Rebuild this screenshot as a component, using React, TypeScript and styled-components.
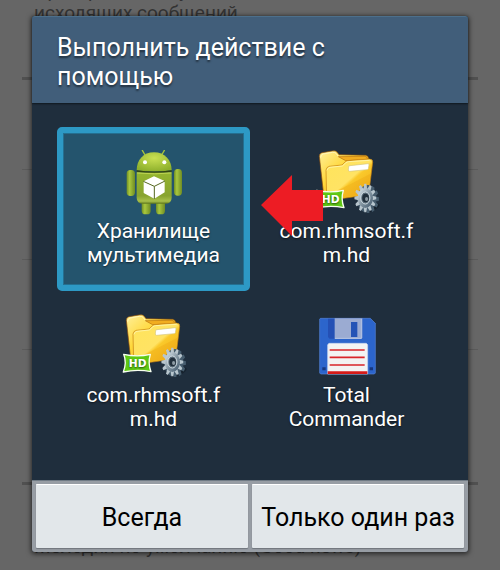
import React from "react";
import styled, { createGlobalStyle } from "styled-components";

const GlobalStyle = createGlobalStyle`
  * { box-sizing: border-box; }
  body {
    margin: 0;
    background: #666666;
    font-family: Roboto, "Noto Sans", sans-serif;
    overflow: hidden;
  }
`;

const Screen = styled.div`
  position: relative;
  min-height: 100vh;
  overflow: hidden;
`;

const SettingsPage = styled.main`
  padding: 2px 22px 0;
  color: #333333;
  font-size: 19px;
  line-height: 22px;
`;

const Summary = styled.p`
  margin: 0;
  padding: 0 12px;
  height: 22px;
  display: flex;
  align-items: flex-end;
`;

const SettingsGroup = styled.ul`
  list-style: none;
  margin: 53px 0 51px;
  padding: 0;
  border: solid #505050;
  border-width: 3px 0;
`;

const SettingsRow = styled.li<{ $tall?: boolean }>`
  height: ${(p) => (p.$tall ? 132 : 90)}px;
  border-bottom: ${(p) => (p.$tall ? "none" : "1px solid #5a5a5a")};
`;

const Overlay = styled.div`
  position: absolute;
  inset: 0;
  padding: 16px 32px 18px;
`;

const Dialog = styled.section`
  border-radius: 3px;
  box-shadow: 0 1px 5px 1px rgba(0, 0, 0, 0.6);
  background: #1f2e3d;
`;

const DialogHeader = styled.header`
  padding: 16px 25px 12px;
  background: #415e7a;
  border-top: 1px solid #4c6f8b;
  border-radius: 3px 3px 0 0;
  box-shadow: 0 1px 2px rgba(0, 0, 0, 0.5);
`;

const Title = styled.h1`
  margin: 0;
  max-width: 340px;
  color: #ffffff;
  font-size: 25px;
  font-weight: 400;
  line-height: 29px;
  text-shadow: 0 2px 2px rgba(0, 0, 0, 0.5);
`;

const AppGrid = styled.div`
  display: grid;
  grid-template-columns: 1fr 1fr;
  padding: 24px 25px 25px;
`;

const Cell = styled.div`
  position: relative;
  display: grid;
`;

const AppCard = styled.button<{ $selected?: boolean }>`
  display: flex;
  flex-direction: column;
  align-items: center;
  justify-content: flex-start;
  min-height: 164px;
  padding: 17px 20px;
  border: 6px solid ${(p) => (p.$selected ? "#2d99c5" : "transparent")};
  border-radius: 5px;
  background: ${(p) => (p.$selected ? "#24546d" : "transparent")};
  box-shadow: ${(p) => (p.$selected ? "inset 0 0 0 1px #246f90" : "none")};
  color: #ffffff;
  font: 400 21px/24px Roboto, "Noto Sans", sans-serif;
  text-shadow: 0 1px 2px rgba(0, 0, 0, 0.6);
  cursor: pointer;
`;

const AppName = styled.span`
  margin-top: 3px;
  max-width: 100%;
  overflow-wrap: anywhere;
`;

const IconSvg = styled.svg`
  display: block;
  width: 72px;
  height: 66px;
  flex: none;
`;

const PointerArrow = styled.svg`
  position: absolute;
  left: calc(100% + 11px);
  top: 48px;
  width: 62px;
  height: 61px;
  z-index: 1;
  pointer-events: none;
`;

const Actions = styled.footer`
  display: grid;
  grid-template-columns: 1fr 1fr;
  gap: 4px;
  padding: 3px 4px 4px;
  background: #979da4;
  border-top: 1px solid #6f7a84;
  border-radius: 0 0 3px 3px;
`;

const ActionButton = styled.button`
  height: 64px;
  padding: 2px 0 0;
  border: 0;
  border-top: 1px solid #ffffff;
  border-radius: 1px;
  background: #e2e7ea;
  box-shadow: 0 1px 1px #70767d;
  color: #000000;
  font: 400 25px/28px Roboto, "Noto Sans", sans-serif;
  white-space: nowrap;
  cursor: pointer;
`;

const AndroidIcon = () => (
  <IconSvg viewBox="22 30 216 198" aria-hidden="true">
    <defs>
      <linearGradient id="limb" x1="0" x2="1">
        <stop offset="0" stopColor="#718f25" />
        <stop offset="0.35" stopColor="#a9c83d" />
        <stop offset="1" stopColor="#6f8c24" />
      </linearGradient>
      <linearGradient id="torso" x1="0" x2="0" y1="0" y2="1">
        <stop offset="0" stopColor="#94b52f" />
        <stop offset="0.75" stopColor="#88a32f" />
        <stop offset="0.92" stopColor="#a8c04b" />
        <stop offset="1" stopColor="#60791c" />
      </linearGradient>
      <radialGradient id="head" cx="0.5" cy="0.3" r="0.7">
        <stop offset="0" stopColor="#c9e052" />
        <stop offset="1" stopColor="#8eb02c" />
      </radialGradient>
    </defs>
    <path d="M95 31l8 14M161 31l-8 14" stroke="#a5c63b" strokeWidth="4" strokeLinecap="round" />
    <rect x="93" y="175" width="27" height="48" rx="11" fill="url(#limb)" />
    <rect x="136" y="175" width="27" height="48" rx="11" fill="url(#limb)" />
    <rect x="48" y="90" width="25" height="78" rx="11" fill="url(#limb)" />
    <rect x="190" y="87" width="24" height="80" rx="11" fill="url(#limb)" />
    <path d="M78 97h105v76q0 18-20 18H98q-20 0-20-18z" fill="url(#torso)" />
    <path d="M79 99q52 5 103 0" fill="none" stroke="#bfd451" strokeWidth="3" />
    <path d="M78 91c0-31 20-54 52-54s53 23 53 54q-52 7-105 0z" fill="url(#head)" />
    <path d="M78 91q52 7 105 0v4q-52 6-105 0z" fill="#34450f" />
    <circle cx="103" cy="67" r="6" fill="#fff" />
    <circle cx="161" cy="67" r="6" fill="#fff" />
    <path d="M130 109l32 14v34l-31 19-32-17v-35z" fill="#fff" />
    <path d="M98 124l33 15 32-16M131 139v38" fill="none" stroke="#55671f" strokeWidth="3" />
  </IconSvg>
);

const gearTeeth = Array.from({ length: 12 }, (_, i) => i * 30);

const FolderIcon = ({ id }: { id: string }) => (
  <IconSvg viewBox="22 27 216 198" aria-hidden="true">
    <defs>
      <linearGradient id={`${id}-back`} x1="0" y1="0" x2="1" y2="1">
        <stop offset="0" stopColor="#fff09a" />
        <stop offset="0.4" stopColor="#ffd83c" />
        <stop offset="1" stopColor="#e0940c" />
      </linearGradient>
      <linearGradient id={`${id}-front`} x1="0" y1="0" x2="1" y2="1">
        <stop offset="0" stopColor="#ffe45a" />
        <stop offset="0.5" stopColor="#ffe364" />
        <stop offset="0.55" stopColor="#fac92b" />
        <stop offset="1" stopColor="#eda511" />
      </linearGradient>
      <linearGradient id={`${id}-gear`} x1="0" y1="0" x2="1" y2="1">
        <stop offset="0" stopColor="#e3edf2" />
        <stop offset="0.5" stopColor="#8799a5" />
        <stop offset="1" stopColor="#3c5367" />
      </linearGradient>
    </defs>
    <path
      d="M47 46q0-9 8-11l30-5q11-2 15 3l6 8 80 2q8 1 9 9l-20 100-90 14-25-4z"
      fill={`url(#${id}-back)`} stroke="#8c4d0b" strokeWidth="2"
    />
    <path d="M51 50q1-9 8-11l27-5q9-1 12 4l6 8" fill="none" stroke="#fff6b8" strokeWidth="3" />
    <path d="M104 47l80-1q7 0 8 9l-66 4z" fill="#f1ad20" stroke="#b9730f" strokeWidth="2" />
    <path
      d="M67 87q1-9 10-11l38-4 9-9q4-4 10-4l63-5q11 0 10 10l-11 88q-2 10-11 11l-103 14q-12-1-13-12z"
      fill={`url(#${id}-front)`} stroke="#c57e0f" strokeWidth="2"
    />
    <path d="M70 88q2-8 9-9l37-4 10-9q4-4 9-4l63-4" fill="none" stroke="#fff3a4" strokeWidth="3" />
    <path d="M75 161q59-28 125-63l-9 54q-1 8-8 8l-104 14z" fill="#e99f10" opacity="0.28" />
    <path d="M135 77q0-3 4-3l54-6q4 0 3 4l-2 11q-1 3-4 3l-52 5q-4 0-4-4z" fill="#fff" stroke="#d6c77e" strokeWidth="2" />
    <path d="M39 148q41 9 80 0-8 26 2 52-42-8-83 1 11-29 1-53z" fill="#5fc914" stroke="#f8fff0" strokeWidth="4" strokeLinejoin="round" />
    <text x="81" y="186" textAnchor="middle" fontFamily="DejaVu Sans" fontWeight="700" fontSize="32" fill="#fff">HD</text>
    <ellipse cx="205" cy="201" rx="25" ry="9" fill="#0e1922" opacity="0.55" transform="rotate(-25 205 201)" />
    <g transform="translate(193 174) scale(0.78 1)" fill="#475d6e">
      {gearTeeth.map((angle) => (
        <path key={angle} d="M-5-42h10l3 15H-8z" transform={`rotate(${angle})`} />
      ))}
      <circle r="30" />
    </g>
    <g transform="translate(185 171) scale(0.76 1)">
      {gearTeeth.map((angle) => (
        <path key={angle} d="M-4-43h8l3 16H-7z" fill="#b8c6ce" transform={`rotate(${angle})`} />
      ))}
      <circle r="30" fill={`url(#${id}-gear)`} />
      <circle r="18" fill="#5b6d7a" stroke="#dce7ed" strokeWidth="3" />
      <circle cx="1" r="13" fill="#22303c" />
      <circle cx="5" cy="3" r="6" fill="#8d9ba4" />
    </g>
  </IconSvg>
);

const FloppyIcon = () => (
  <IconSvg viewBox="31 27 216 198" aria-hidden="true">
    <path d="M59 40h150l15 15v149l-3 3H60l-3-3V43z" fill="#2c65cc" stroke="#5584d6" strokeWidth="2" />
    <path d="M82 41h21v60H87l-5-5z" fill="#2450b5" />
    <path d="M102 40h83v58l-3 4h-80z" fill="#9babd2" />
    <path d="M182 42v58h-79" fill="none" stroke="#b4c2e2" strokeWidth="3" />
    <rect x="151" y="51" width="19" height="45" fill="#2453b6" />
    <path d="M85 115h112l4 4v88H81v-88z" fill="#f3f3f3" stroke="#c8d6ef" strokeWidth="2" />
    <path d="M81 199h119v8H81z" fill="#d61b18" />
    <path d="M87 135h105M87 157h105M87 180h105" stroke="#d9252a" strokeWidth="5" />
    <path d="M65 187h10v9H65zM207 187h10v9h-10z" fill="#17377d" />
  </IconSvg>
);

export default function App() {
  return (
    <Screen>
      <GlobalStyle />
      <SettingsPage>
        <Summary>
          <span>
            Проигрывать звук для входящих и<br />
            исходящих сообщений
          </span>
        </Summary>
        <SettingsGroup>
          <SettingsRow />
          <SettingsRow />
          <SettingsRow />
          <SettingsRow $tall />
        </SettingsGroup>
        <Summary>Мелодия по умолчанию (Good news)</Summary>
      </SettingsPage>
      <Overlay>
        <Dialog role="dialog" aria-labelledby="dialog-title">
          <DialogHeader>
            <Title id="dialog-title">Выполнить действие с помощью</Title>
          </DialogHeader>
          <AppGrid>
            <Cell>
              <AppCard $selected aria-pressed="true">
                <AndroidIcon />
                <AppName>Хранилище мультимедиа</AppName>
              </AppCard>
              <PointerArrow viewBox="0 0 62 61" aria-hidden="true">
                <path d="M0 30L31 0v15h31v31H31v15z" fill="#ed1c24" />
              </PointerArrow>
            </Cell>
            <Cell>
              <AppCard>
                <FolderIcon id="folder-a" />
                <AppName>com.rhmsoft.fm.hd</AppName>
              </AppCard>
            </Cell>
            <Cell>
              <AppCard>
                <FolderIcon id="folder-b" />
                <AppName>com.rhmsoft.fm.hd</AppName>
              </AppCard>
            </Cell>
            <Cell>
              <AppCard>
                <FloppyIcon />
                <AppName>Total Commander</AppName>
              </AppCard>
            </Cell>
          </AppGrid>
          <Actions>
            <ActionButton>Всегда</ActionButton>
            <ActionButton>Только один раз</ActionButton>
          </Actions>
        </Dialog>
      </Overlay>
    </Screen>
  );
}
